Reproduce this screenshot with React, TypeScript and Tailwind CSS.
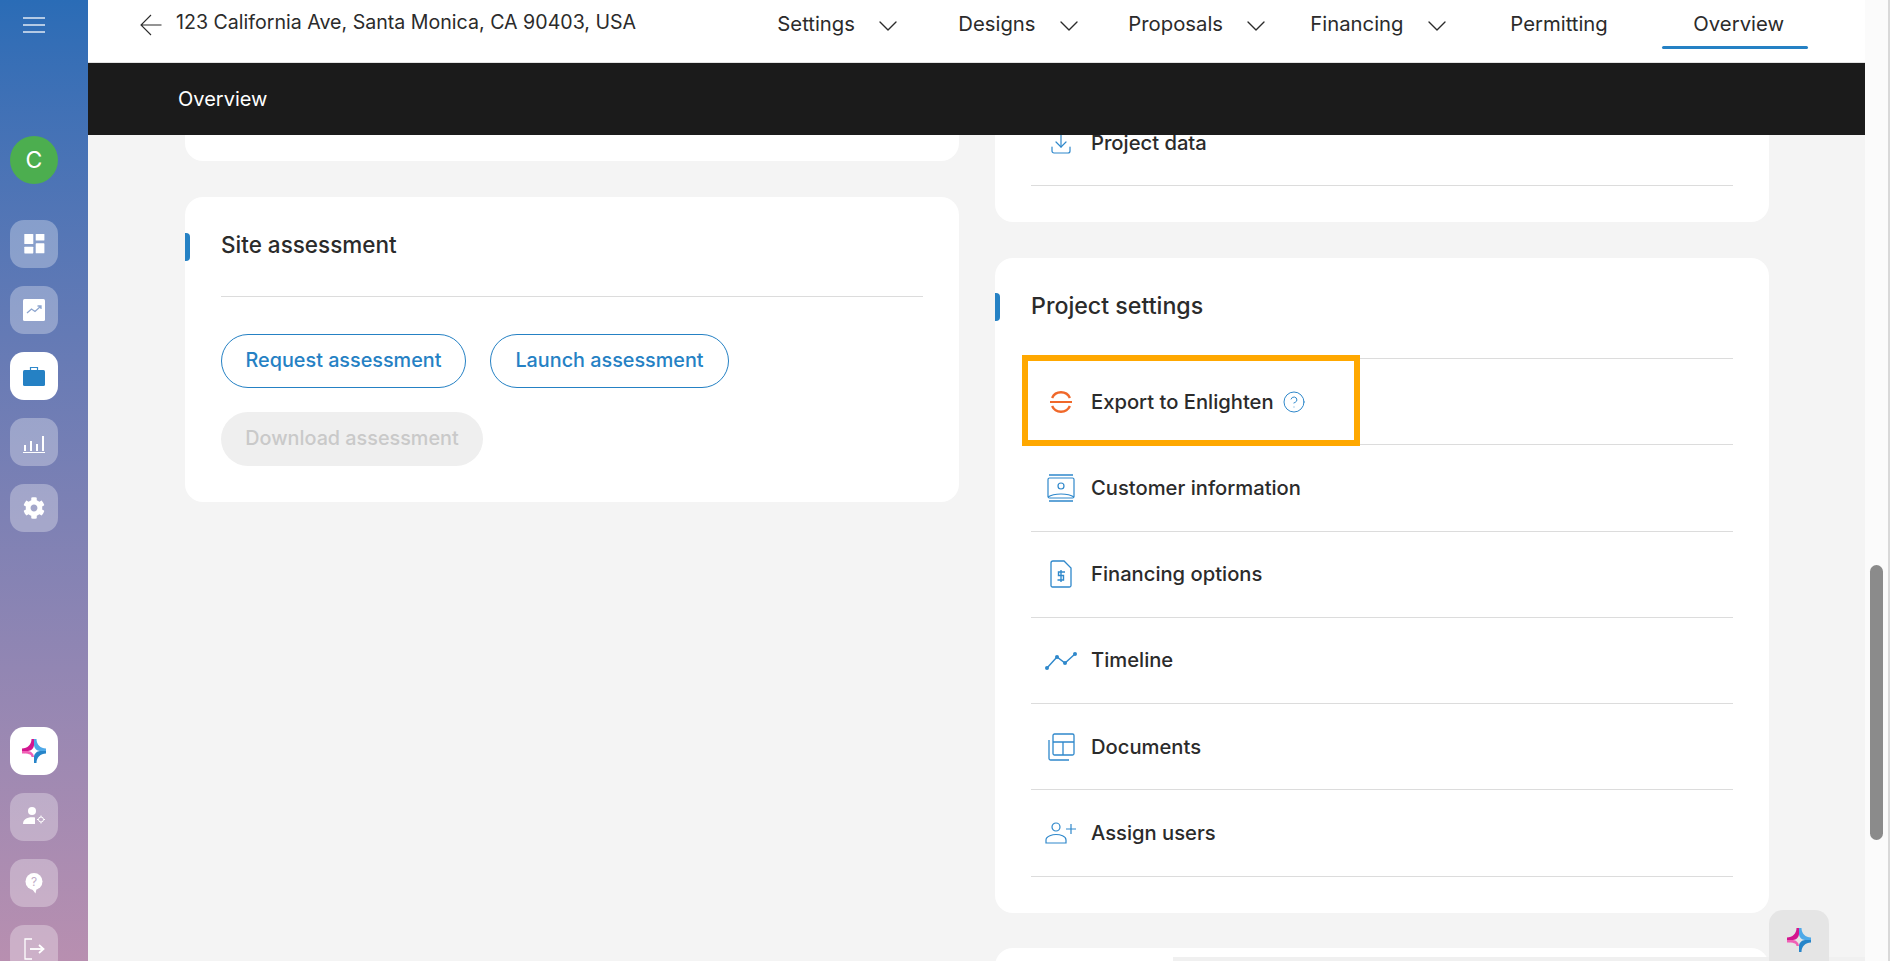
import { ChevronDown, CircleHelp, Download } from "lucide-react";
import { FaCog } from "react-icons/fa";
import type { ReactNode } from "react";

const ink = "text-[#2b2b2b]";
const blue = "#2f88cb";

const Star = ({ size = 24 }: { size?: number }) => (
  <svg width={size} height={size} viewBox="0 0 24 24">
    <path d="M9.5 0H12V6C12 9 9 12 6 12H0V9.5C5.5 9.5 9.5 5.5 9.5 0Z" fill="#d3168f" />
    <path d="M0 12H6C9 12 12 15 12 18H9.5C9.5 15 6 14.5 0 14.5Z" fill="#f060b5" />
    <path d="M12 0H14.5C14.5 5.5 18.5 9.5 24 9.5V12H18C15 12 12 9 12 6Z" fill="#4fa9e8" />
    <path d="M24 12V14.5C18.5 14.5 14.5 18.5 14.5 24H12V18C12 15 15 12 18 12Z" fill="#2785c9" />
  </svg>
);

const Tile = ({ active, children }: { active?: boolean; children: ReactNode }) => (
  <div
    className={`flex h-12 w-12 shrink-0 items-center justify-center rounded-[14px] ${
      active ? "bg-white" : "bg-white/30"
    }`}
  >
    {children}
  </div>
);

const NavItem = ({
  label,
  caret,
  active,
  width,
}: {
  label: string;
  caret?: boolean;
  active?: boolean;
  width?: string;
}) => (
  <div className={`relative flex h-[49px] items-center ${width ?? ""}`}>
    <span className="text-[20.3px] leading-none">{label}</span>
    {caret && <ChevronDown size={32} strokeWidth={1} className="mt-[2px] ml-[17px]" />}
    {active && <span className="absolute -left-[31px] -right-6 bottom-0 h-[3px] rounded-sm bg-[#2581c4]" />}
  </div>
);

const Row = ({ icon, label, children }: { icon: ReactNode; label: string; children?: ReactNode }) => (
  <div className={`relative flex h-[86.3px] items-center border-b border-[#dcdcdc] ${ink}`}>
    <div className="flex w-[60px] justify-center">{icon}</div>
    <span className="text-[20.2px] font-medium leading-none">{label}</span>
    {children}
  </div>
);

const Accent = () => <span className="absolute left-0 h-7 w-[5px] rounded-r-sm bg-[#2581c4]" />;

export default function App() {
  return (
    <div className={`flex h-screen overflow-hidden bg-[#f4f4f4] font-['Inter',sans-serif] ${ink}`}>
      <aside className="flex w-[88px] shrink-0 flex-col items-center bg-gradient-to-b from-[#2a6cb6] to-[#b88fb0] pr-5">
        <svg width="22" height="16" viewBox="0 0 22 16" className="mt-[17px]" stroke="white" strokeOpacity="0.85" strokeWidth="1.3">
          <path d="M0 1H22M0 8H22M0 15H22" />
        </svg>
        <div className="mt-[103px] flex h-12 w-12 items-center justify-center rounded-full bg-[#4cae4f] text-[23px] text-white">
          C
        </div>
        <div className="mt-9 flex flex-col gap-[18px]">
          <Tile>
            <svg width="24" height="24" viewBox="0 0 24 24" fill="white">
              <rect x="2.3" y="2" width="9" height="10" rx="0.6" />
              <rect x="13.700" y="2" width="8.700" height="6.500" rx="0.6" />
              <rect x="2.3" y="14.700" width="9" height="6.700" rx="0.6" />
              <rect x="13.700" y="11.300" width="8.700" height="10" rx="0.6" />
            </svg>
          </Tile>
          <Tile>
            <svg width="24" height="24" viewBox="0 0 24 24">
              <rect x="1" y="1" width="22" height="22" rx="1.5" fill="white" />
              <path d="M5 15L9.5 11L13 13.5L19 8M15.5 8H19V11" fill="none" stroke="#8ea6cf" strokeWidth="1.3" />
            </svg>
          </Tile>
          <Tile active>
            <svg width="24" height="24" viewBox="0 0 24 24">
              <path d="M8.5 6V3.5H15.5V6" fill="none" stroke={blue} strokeWidth="1.2" />
              <rect x="1" y="6" width="22" height="16" rx="1.5" fill="#2581c4" />
            </svg>
          </Tile>
          <Tile>
            <svg width="24" height="24" viewBox="0 0 24 24" fill="white">
              <rect x="2" y="15" width="2" height="6" />
              <rect x="8" y="11" width="2" height="10" />
              <rect x="14" y="14" width="2" height="7" />
              <rect x="20" y="6" width="2" height="15" />
              <rect x="1" y="22" width="22" height="1" />
            </svg>
          </Tile>
          <Tile>
            <FaCog size={22} color="white" />
          </Tile>
        </div>
        <div className="mt-auto -mb-3 flex flex-col gap-[18px]">
          <Tile active>
            <Star />
          </Tile>
          <Tile>
            <svg width="24" height="24" viewBox="0 0 24 24" fill="white">
              <circle cx="10" cy="6" r="4" />
              <path d="M1 19C1 14 6 11.5 13 12.5V19Z" />
              <circle cx="19" cy="14.500" r="2.500" fill="none" stroke="white" strokeWidth="1" />
              <path d="M19 10.500V12M19 17V18.500M15 14.500H16.500M21.500 14.500H23" stroke="white" strokeWidth="1" />
            </svg>
          </Tile>
          <Tile>
            <svg width="24" height="24" viewBox="0 0 24 24">
              <circle cx="12" cy="10.500" r="8.500" fill="white" />
              <path d="M10 18L13.500 22.500L14.500 18Z" fill="white" />
              <text x="12" y="15" textAnchor="middle" fontSize="12" fill="#c3aec9">?</text>
            </svg>
          </Tile>
          <Tile>
            <svg width="24" height="24" viewBox="0 0 24 24" fill="none" stroke="white" strokeWidth="1.3">
              <path d="M10 2H3V22H10" />
              <path d="M8 12H21" strokeWidth="1.800" />
              <path d="M17 8L21.500 12L17 16" strokeWidth="1.800" />
            </svg>
          </Tile>
        </div>
      </aside>

      <div className="flex min-w-0 flex-1 flex-col">
        <header className="flex h-[63px] shrink-0 border-b border-[#e2e2e2] bg-white pr-[25px]">
          <div className="flex flex-1 items-start pl-[52px] pt-[10px]">
            <svg width="22" height="22" viewBox="0 0 22 22" className="mt-[4px] mr-[14px]" fill="none" stroke="#2b2b2b" strokeWidth="1.100">
              <path d="M21.500 11H1M11 1L1 11L11 21" />
            </svg>
            <span className="text-[19.6px] leading-6">123 California Ave, Santa Monica, CA 90403, USA</span>
          </div>
          <nav className="flex pr-[81px]">
            <NavItem label="Settings" caret width="w-[181px]" />
            <NavItem label="Designs" caret width="w-[170px]" />
            <NavItem label="Proposals" caret width="w-[182px]" />
            <NavItem label="Financing" caret width="w-[200px]" />
            <NavItem label="Permitting" width="w-[183px]" />
            <NavItem label="Overview" active />
          </nav>
        </header>
        <div className="flex h-[72px] shrink-0 items-center bg-[#1b1b1b] pb-px pl-[90px] text-[20px] text-white">Overview</div>

        <div className="flex min-h-0 flex-1">
          <main className="flex flex-1 gap-9 pl-[97px]">
            <div className="flex w-[774px] flex-col gap-9">
              <div className="h-[26px] shrink-0 rounded-b-[18px] bg-white" />
              <section className="relative h-[305px] shrink-0 rounded-[18px] bg-white px-9">
                <div className="absolute left-0 top-9">
                  <Accent />
                </div>
                <h2 className="flex h-[100px] items-center border-b border-[#dcdcdc] pb-1 text-[22.5px] font-medium">
                  Site assessment
                </h2>
                <div className="mt-[37px] flex flex-wrap gap-6">
                  <button className="h-[54px] w-[245px] rounded-full border border-[#2581c4] text-[19.8px] font-medium text-[#2581c4]">
                    Request assessment
                  </button>
                  <button className="h-[54px] w-[239px] rounded-full border border-[#2581c4] text-[19.8px] font-medium text-[#2581c4]">
                    Launch assessment
                  </button>
                  <button className="h-[54px] w-[262px] rounded-full bg-[#efefef] text-[19.8px] font-medium text-[#c9c9c9]">
                    Download assessment
                  </button>
                </div>
              </section>
            </div>
            <div className="flex w-[774px] flex-col gap-9">
              <section className="h-[87px] shrink-0 rounded-b-[18px] bg-white px-9">
                <div className={`flex h-[51px] items-start border-b border-[#dcdcdc] ${ink}`}>
                  <div className="flex h-5 w-[60px] justify-center overflow-hidden">
                    <Download size={24} strokeWidth={1.2} color={blue} className="-mt-[3px]" />
                  </div>
                  <span className="text-[20.2px] font-medium leading-4">Project data</span>
                </div>
              </section>
              <section className="relative h-[655px] shrink-0 rounded-[18px] bg-white px-9">
                <div className="absolute left-0 top-[35px]">
                  <Accent />
                </div>
                <h2 className="flex h-[101px] items-center border-b border-[#dcdcdc] pb-1 text-[23.2px] font-medium">
                  Project settings
                </h2>
                <Row
                  icon={
                    <svg width="22" height="22" viewBox="0 0 22 22" fill="none" stroke="#f0682a">
                      <path d="M2.100 7A9.800 9.800 0 0 1 19.900 7M2.100 15A9.800 9.800 0 0 0 19.900 15" strokeWidth="2.400" />
                      <path d="M0 11H22" strokeWidth="2" />
                    </svg>
                  }
                  label="Export to Enlighten"
                >
                  <CircleHelp size={24} strokeWidth={1} color={blue} className="ml-2" />
                  <div className="absolute -left-[9px] -top-[4px] h-[91px] w-[338px] border-[6px] border-[#ffa800]" />
                </Row>
                <Row
                  icon={
                    <svg width="28" height="28" viewBox="0 0 28 28" fill="none" stroke={blue} strokeWidth="1.200">
                      <path d="M2 1H26M2 27H26" strokeWidth="1.500" />
                      <rect x="1" y="4" width="26" height="20" rx="1.500" />
                      <circle cx="14" cy="12" r="3" />
                      <path d="M1 23C7 19 21 19 27 23" />
                    </svg>
                  }
                  label="Customer information"
                />
                <Row
                  icon={
                    <svg width="24" height="28" viewBox="0 0 24 28" fill="none" stroke={blue} strokeWidth="1.300">
                      <path d="M4 1H15L22 8V25.500A1.500 1.500 0 0 1 20.500 27H3.500A1.500 1.500 0 0 1 2 25.500V3A2 2 0 0 1 4 1Z" />
                      <path d="M16 12H9.500V15.500H14.500V20H8.500M12 10V22" strokeWidth="1.400" />
                    </svg>
                  }
                  label="Financing options"
                />
                <Row
                  icon={
                    <svg width="32" height="18" viewBox="0 0 32 18" fill="none" stroke={blue} strokeWidth="1.400">
                      <path d="M2 16L12 5L20 11L30 2" />
                      <g fill={blue} stroke="none">
                        <circle cx="2" cy="16" r="2" />
                        <circle cx="12" cy="5" r="2" />
                        <circle cx="20" cy="11" r="2" />
                        <circle cx="30" cy="2" r="2" />
                      </g>
                    </svg>
                  }
                  label="Timeline"
                />
                <Row
                  icon={
                    <svg width="28" height="28" viewBox="0 0 28 28" fill="none" stroke={blue} strokeWidth="1.300">
                      <rect x="6" y="1" width="21" height="21" rx="1.500" />
                      <path d="M6 9H27M16 9V22" />
                      <path d="M2 7V25.500A1.500 1.500 0 0 0 3.500 27H22" />
                    </svg>
                  }
                  label="Documents"
                />
                <Row
                  icon={
                    <svg width="32" height="22" viewBox="0 0 32 22" fill="none" stroke={blue} strokeWidth="1.200">
                      <circle cx="11" cy="5" r="4" />
                      <path d="M1 21V18C1 14 8 12.500 11 12.500C15 12.500 21 14 21 18V21Z" />
                      <path d="M26 2V12M21 7H31" />
                    </svg>
                  }
                  label="Assign users"
                />
              </section>
              <section className="-mt-px h-[60px] shrink-0 rounded-t-[18px] bg-white" />
            </div>
          </main>
        </div>
      </div>

      {/* thin bar along the bottom edge */}
      <div className="absolute bottom-0 left-[1173px] right-[25px] h-1 bg-[#f0f0f0]" />

      {/* floating assistant button */}
      <div className="absolute bottom-0 left-[1769px] flex h-[51px] w-[60px] items-start justify-center rounded-t-[14px] bg-[#e5e5e5] pt-[18px]">
        <Star />
      </div>

      {/* page scrollbar */}
      <div className="absolute bottom-0 right-0 top-0 w-[25px] border-r-2 border-[#d9d9d9] bg-[#fbfbfb]">
        <div className="absolute left-[5px] top-[565px] h-[275px] w-[13px] rounded-full bg-[#8b8b8b]" />
      </div>
    </div>
  );
}
